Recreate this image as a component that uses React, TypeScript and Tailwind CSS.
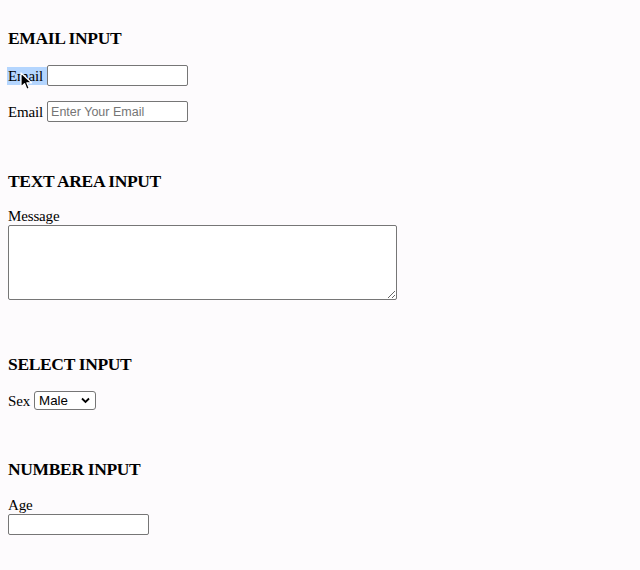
import React from 'react';

const Heading: React.FC<{ title: string; className?: string }> = ({ title, className }) => (
  <h3 className={`text-[17.5px] font-bold leading-[22px] tracking-[-0.02em] ${className ?? ''}`}>{title}</h3>
);

const inputCls =
  "h-[21px] w-[141px] rounded-[2px] border border-[#767676] bg-white px-[3px] font-['Liberation_Sans',Arial,sans-serif] text-[12.5px] tracking-normal text-black placeholder:text-[#757575] outline-none";

const App: React.FC = () => {
  return (
    <div className="min-h-[570px] bg-[#fdfbfd] px-2 pt-2 font-['Liberation_Serif','Times_New_Roman',serif] text-[15px] tracking-[-0.01em] text-black">
      {/* email */}
      <Heading title="EMAIL INPUT" className="mt-[19px]" />
      <div className="relative mt-[16px] flex h-[21px] items-center">
        <span className="-ml-px bg-[#b4d5fe] pl-px pr-[4px] leading-[18px]">Email</span>
        <input type="email" className={inputCls} />
        <svg className="absolute left-[12px] top-[7px]" width="13" height="19" viewBox="0 0 13 19">
          <path d="M1 1 L1 15 L4.5 11.6 L6.8 17.2 L9.2 16.2 L6.9 10.8 L11.6 10.8 Z" fill="#000" stroke="#fff" strokeWidth="1.2" strokeLinejoin="round" />
        </svg>
      </div>
      <div className="mt-[15px] flex h-[21px] items-center">
        <span className="pr-[4px] leading-[18px]">Email</span>
        <input type="email" placeholder="Enter Your Email" className={inputCls} />
      </div>

      {/* textarea */}
      <Heading title="TEXT AREA INPUT" className="mt-[48px]" />
      <div className="mt-[15px] leading-[18px]">Message</div>
      <textarea className="block h-[75px] w-[389px] rounded-[2px] border border-[#767676] bg-white outline-none" />

      {/* select */}
      <Heading title="SELECT INPUT" className="mt-[53px]" />
      <div className="mt-[16px] flex h-[19px] items-center">
        <span className="pr-[4px] leading-[18px]">Sex</span>
        <div className="relative">
          <select className="block h-[19px] w-[62px] appearance-none rounded-[3px] border border-[#767676] bg-white pl-[4px] font-['Liberation_Sans',Arial,sans-serif] text-[13.33px] leading-[17px] tracking-normal text-black outline-none">
            <option>Male</option>
            <option>Female</option>
          </select>
          <svg className="pointer-events-none absolute right-[6px] top-[6px]" width="9" height="7" viewBox="0 0 9 7">
            <path d="M1 1.5 L4.5 5 L8 1.5" fill="none" stroke="#000" strokeWidth="1.8" />
          </svg>
        </div>
      </div>

      {/* number */}
      <Heading title="NUMBER INPUT" className="mt-[48px]" />
      <div className="mt-[16px] leading-[18px]">Age</div>
      <input type="number" className={`block ${inputCls}`} />
    </div>
  );
};

export default App;
